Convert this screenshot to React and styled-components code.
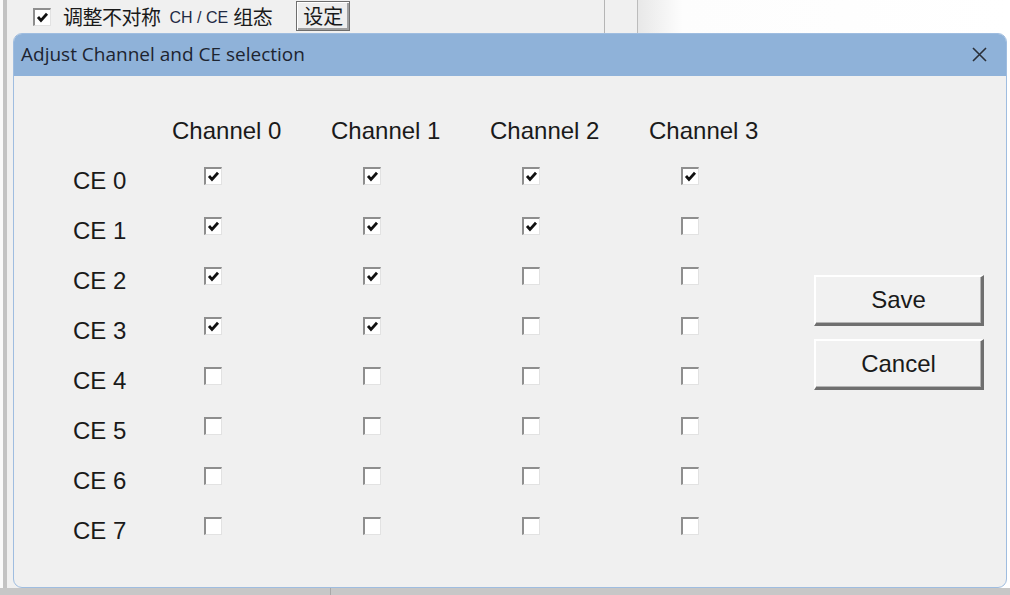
import React from 'react';
import styled, { createGlobalStyle } from 'styled-components';

const GlobalStyle = createGlobalStyle`
  html, body {
    margin: 0;
    padding: 0;
    background: #f0f0f0;
  }
  #root {
    width: 1010px;
    height: 595px;
    overflow: hidden;
  }
`;

const Host = styled.div`
  position: relative;
  width: 1010px;
  height: 595px;
  display: flex;
  flex-direction: column;
  background: #f0f0f0;
  font-family: "Liberation Sans", Arial, sans-serif;
`;

const HostMain = styled.div`
  flex: 1;
  display: flex;
`;

const HostEdge = styled.div`
  width: 3px;
  background: #fafafa;
  border-right: 4px solid #c3c3c3;
`;

const HostPanel = styled.div`
  width: 597px;
  display: flex;
  flex-direction: column;
  border-right: 1px solid #b5b5b5;
`;

const HostSide = styled.div`
  width: 32px;
  border-right: 1px solid #bcbcbc;
`;

const HostRight = styled.div`
  flex: 1;
  background: linear-gradient(90deg, #e8e8e8 0%, #fdfdfd 12%, #ffffff 100%);
`;

const TopBar = styled.div`
  height: 33px;
  display: flex;
  align-items: center;
  padding-left: 26px;
`;

const TopLabel = styled.span`
  font-family: "Noto Sans CJK SC", "Noto Sans", sans-serif;
  font-size: 20px;
  color: #1a1a1a;
  margin-left: 12px;
  display: flex;
  align-items: center;
  letter-spacing: -0.5px;
`;

const Small = styled.span`
  font-family: "Liberation Sans", Arial, sans-serif;
  font-size: 16px;
  margin: 2px 5px 0 9px;
  color: #1f2a44;
  letter-spacing: 0;
`;

const TopButton = styled.div`
  margin-left: 24px;
  height: 28px;
  padding: 0 6px;
  display: flex;
  align-items: center;
  font-family: "Noto Sans CJK SC", sans-serif;
  font-size: 20px;
  color: #1a1a1a;
  background: #eeeeee;
  border: 1px solid #6e6e6e;
  box-shadow: inset 1px 1px 0 #ffffff, inset -2px -2px 0 #a0a0a0;
  margin-bottom: 2px;
`;

const HostBottom = styled.div`
  height: 7px;
  display: flex;
  background: #c7c7c7;
`;

const BottomLeft = styled.div`
  width: 330px;
  border-right: 1px solid #a8a8a8;
`;

const Dialog = styled.div`
  position: absolute;
  left: 13px;
  top: 33px;
  width: 994px;
  height: 555px;
  display: flex;
  flex-direction: column;
  border-radius: 9px;
  border: 1px solid #9fbde0;
  box-sizing: border-box;
  background: #f0f0f0;
  overflow: hidden;
`;

const TitleBar = styled.div`
  height: 42px;
  flex-shrink: 0;
  display: flex;
  align-items: center;
  justify-content: space-between;
  background: #8fb2d9;
  padding: 0 19px 2px 7px;
  font-family: "Open Sans", "Noto Sans", sans-serif;
  font-size: 19px;
  color: #1d2430;
  box-sizing: border-box;
`;

const Body = styled.div`
  flex: 1;
  display: flex;
  padding: 30px 0 0 59px;
`;

const Grid = styled.div`
  display: grid;
  grid-template-columns: 99px repeat(4, 159px);
  grid-auto-rows: 50px;
  align-items: center;
`;

const Header = styled.div`
  font-size: 24px;
  color: #1a1a1a;
`;

const RowLabel = styled.div`
  font-size: 24px;
  color: #1a1a1a;
`;

const Cell = styled.div`
  display: flex;
  align-items: center;
  padding-left: 32px;
  margin-bottom: 10px;
`;

const Box = styled.div`
  width: 18px;
  height: 18px;
  box-sizing: border-box;
  background: #ffffff;
  border-top: 2px solid #8e8e8e;
  border-left: 2px solid #8e8e8e;
  border-right: 1px solid #e2e2e2;
  border-bottom: 1px solid #e2e2e2;
  display: flex;
  align-items: center;
  justify-content: center;
`;

const Buttons = styled.div`
  display: flex;
  flex-direction: column;
  gap: 13px;
  margin-top: 169px;
  margin-left: 6px;
`;

const Button = styled.div`
  width: 170px;
  height: 51px;
  box-sizing: border-box;
  display: flex;
  align-items: center;
  justify-content: center;
  font-size: 24px;
  color: #1a1a1a;
  background: #f1f1f1;
  border-top: 2px solid #ffffff;
  border-left: 2px solid #ffffff;
  border-right: 3px solid #6f6f6f;
  border-bottom: 3px solid #6f6f6f;
  box-shadow: inset -1px -1px 0 #b4b4b4;
`;

const Check = ({ checked }) => (
  <Box>
    {checked && (
      <svg width="13" height="13" viewBox="0 0 13 13">
        <path d="M2 6 L5 9.5 L11 2.8" fill="none" stroke="#111" strokeWidth="2.8" />
      </svg>
    )}
  </Box>
);

const Close = () => (
  <svg width="15" height="15" viewBox="0 0 15 15">
    <path d="M1 1 L14 14 M14 1 L1 14" stroke="#2a2f38" strokeWidth="1.6" />
  </svg>
);

const checks = [
  [1, 1, 1, 1],
  [1, 1, 1, 0],
  [1, 1, 0, 0],
  [1, 1, 0, 0],
  [0, 0, 0, 0],
  [0, 0, 0, 0],
  [0, 0, 0, 0],
  [0, 0, 0, 0],
];

export default function App() {
  return (
    <>
      <GlobalStyle />
      <Host>
        <HostMain>
          <HostEdge />
          <HostPanel>
            <TopBar>
              <Check checked />
              <TopLabel>
                调整不对称<Small>CH / CE</Small>组态
              </TopLabel>
              <TopButton>设定</TopButton>
            </TopBar>
          </HostPanel>
          <HostSide />
          <HostRight />
        </HostMain>
        <HostBottom>
          <BottomLeft />
        </HostBottom>

        <Dialog>
          <TitleBar>
            <span>Adjust Channel and CE selection</span>
            <Close />
          </TitleBar>
          <Body>
            <Grid>
              <div />
              {[0, 1, 2, 3].map(c => (
                <Header key={c}>Channel {c}</Header>
              ))}
              {checks.map((row, r) => (
                <React.Fragment key={r}>
                  <RowLabel>CE {r}</RowLabel>
                  {row.map((v, c) => (
                    <Cell key={c}>
                      <Check checked={!!v} />
                    </Cell>
                  ))}
                </React.Fragment>
              ))}
            </Grid>
            <Buttons>
              <Button>Save</Button>
              <Button>Cancel</Button>
            </Buttons>
          </Body>
        </Dialog>
      </Host>
    </>
  );
}
